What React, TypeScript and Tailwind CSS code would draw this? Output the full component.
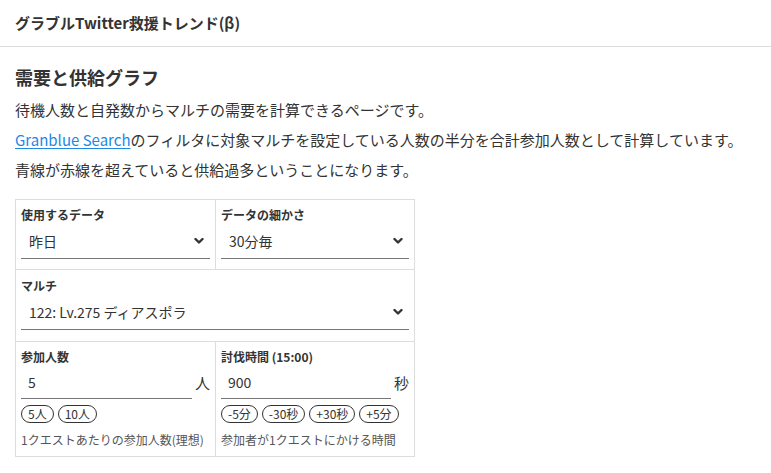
import React from "react";

const Chevron = () => (
  <svg
    className="pointer-events-none absolute right-[6px] top-1/2 -translate-y-1/2"
    width="10"
    height="7"
    viewBox="0 0 10 7"
    fill="none"
  >
    <path d="M1.5 1.5L5 5l3.5-3.5" stroke="#333" strokeWidth="2.4" strokeLinecap="round" strokeLinejoin="round" />
  </svg>
);

const SelectBox = ({ value }: { value: string }) => (
  <div className="relative h-[35px] border-b border-[#777]">
    <select
      className="h-full w-full appearance-none bg-transparent pl-[8px] pr-[24px] text-[14px] leading-[20px] text-[#333] outline-none"
      defaultValue={value}
    >
      <option>{value}</option>
    </select>
    <Chevron />
  </div>
);

const Pill = ({ label }: { label: string }) => (
  <button className="flex h-[18px] items-center rounded-full border border-[#333] px-[6px] text-[12px] leading-[16px] text-[#333]">
    {label}
  </button>
);

const NumberField = ({
  label,
  value,
  unit,
  pills,
  help,
}: {
  label: string;
  value: string;
  unit: string;
  pills: string[];
  help: string;
}) => (
  <div className="border-r border-b border-[#ddd] px-[5px] pt-[6px] pb-[7px]">
    <div className="text-[12px] font-bold leading-[18px] text-[#333]">{label}</div>
    <div className="flex items-center">
      <input
        className="h-[33px] min-w-0 flex-1 border-b border-[#777] bg-transparent pl-[7px] text-[14px] text-[#333] outline-none"
        defaultValue={value}
        readOnly
      />
      <span className="ml-[3px] w-[15px] text-[15px] leading-[20px] text-[#333]">{unit}</span>
    </div>
    <div className="mt-[6px] flex gap-[4px]">
      {pills.map((p) => (
        <Pill key={p} label={p} />
      ))}
    </div>
    <div className="mt-[8px] text-[12px] leading-[18px] text-[#555]">{help}</div>
  </div>
);

export default function App() {
  return (
    <div className="min-h-screen w-full bg-white font-['Noto_Sans_CJK_JP',sans-serif] text-[#333]">
      <header className="flex h-[47px] items-center border-b border-[#ddd] px-[15px]">
        <h1 className="text-[15px] font-bold leading-[22px] text-[#333]">グラブルTwitter救援トレンド(β)</h1>
      </header>

      <main className="px-[15px] pt-[17px]">
        <h2 className="text-[18px] font-bold leading-[27px]">需要と供給グラフ</h2>
        <p className="mt-[7px] text-[15px] leading-[23px]">待機人数と自発数からマルチの需要を計算できるページです。</p>
        <p className="mt-[7px] text-[15px] leading-[23px]">
          <a href="#" className="text-[#1e88e5] underline underline-offset-2">
            Granblue Search
          </a>
          のフィルタに対象マルチを設定している人数の半分を合計参加人数として計算しています。
        </p>
        <p className="mt-[7px] text-[15px] leading-[23px]">青線が赤線を超えていると供給過多ということになります。</p>

        <div className="mt-[18px] grid w-[400px] grid-cols-[200px_199px] border-t border-l border-[#ddd]">
          <div className="border-r border-b border-[#ddd] px-[5px] pt-[6px] pb-[10px]">
            <div className="text-[12px] font-bold leading-[18px]">使用するデータ</div>
            <SelectBox value="昨日" />
          </div>
          <div className="border-r border-b border-[#ddd] px-[5px] pt-[6px] pb-[10px]">
            <div className="text-[12px] font-bold leading-[18px]">データの細かさ</div>
            <SelectBox value="30分毎" />
          </div>

          <div className="col-span-2 border-r border-b border-[#ddd] px-[5px] pt-[7px] pb-[11px]">
            <div className="text-[12px] font-bold leading-[18px]">マルチ</div>
            <SelectBox value="122: Lv.275 ディアスポラ" />
          </div>

          <NumberField
            label="参加人数"
            value="5"
            unit="人"
            pills={["5人", "10人"]}
            help="1クエストあたりの参加人数(理想)"
          />
          <NumberField
            label="討伐時間 (15:00)"
            value="900"
            unit="秒"
            pills={["-5分", "-30秒", "+30秒", "+5分"]}
            help="参加者が1クエストにかける時間"
          />
        </div>
      </main>
    </div>
  );
}
